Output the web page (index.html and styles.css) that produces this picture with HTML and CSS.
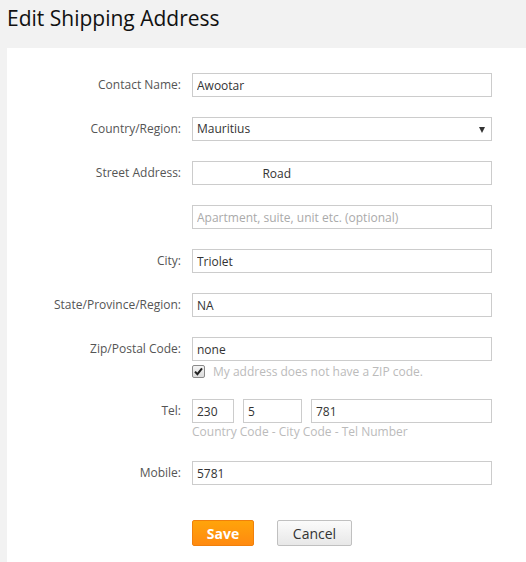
FILE: index.html
```html
<!DOCTYPE html>
<html>
<head>
<meta charset="utf-8">
<link rel="stylesheet" href="styles.css">
</head>
<body>
<h1 class="title">Edit Shipping Address</h1>
<div class="panel">
  <form class="form">
    <div class="row">
      <label class="label">Contact Name:</label>
      <div class="field"><input class="input" type="text" value="Awootar"></div>
    </div>
    <div class="row">
      <label class="label">Country/Region:</label>
      <div class="field select-wrap">
        <div class="input select">Mauritius</div>
        <span class="arrow"></span>
      </div>
    </div>
    <div class="row">
      <label class="label">Street Address:</label>
      <div class="field"><input class="input" type="text" value="                     Road"></div>
    </div>
    <div class="row">
      <label class="label"></label>
      <div class="field"><input class="input" type="text" placeholder="Apartment, suite, unit etc. (optional)"></div>
    </div>
    <div class="row">
      <label class="label">City:</label>
      <div class="field"><input class="input" type="text" value="Triolet"></div>
    </div>
    <div class="row">
      <label class="label">State/Province/Region:</label>
      <div class="field"><input class="input" type="text" value="NA"></div>
    </div>
    <div class="row">
      <label class="label">Zip/Postal Code:</label>
      <div class="field">
        <input class="input" type="text" value="none">
        <div class="note"><span class="check"><svg width="9" height="9" viewBox="0 0 9 9"><path d="M1 4.6 L3.4 7.2 L8 1.4" fill="none" stroke="#222" stroke-width="2"/></svg></span><span>My address does not have a ZIP code.</span></div>
      </div>
    </div>
    <div class="row">
      <label class="label">Tel:</label>
      <div class="field">
        <div class="tel">
          <input class="input tel-cc" type="text" value="230">
          <input class="input tel-city" type="text" value="5">
          <input class="input tel-num" type="text" value="781">
        </div>
        <div class="hint">Country Code - City Code - Tel Number</div>
      </div>
    </div>
    <div class="row">
      <label class="label">Mobile:</label>
      <div class="field"><input class="input" type="text" value="5781"></div>
    </div>
    <div class="row buttons-row">
      <span></span>
      <div class="buttons">
        <button type="button" class="btn btn-save">Save</button>
        <button type="button" class="btn btn-cancel">Cancel</button>
      </div>
    </div>
  </form>
</div>
</body>
</html>
```
FILE: styles.css
```css
html, body {
  margin: 0;
  padding: 0;
}
body {
  background: #f2f2f2;
  font-family: "Open Sans", "Liberation Sans", sans-serif;
  font-size: 12px;
  color: #333;
  padding-left: 7px;
}
.title {
  margin: 0;
  height: 48px;
  line-height: 36px;
  font-size: 21px;
  font-weight: 400;
  color: #111;
}
.panel {
  background: #fff;
  min-height: calc(100vh - 48px);
  box-sizing: border-box;
  padding-top: 25px;
}
.form {
  display: flex;
  flex-direction: column;
  gap: 20px;
  margin: 0;
}
.row {
  display: grid;
  grid-template-columns: 174px 300px;
  column-gap: 11px;
  align-items: start;
}
.label {
  text-align: right;
  line-height: 24px;
  color: #555;
}
.field {
  display: flex;
  flex-direction: column;
}
.input {
  box-sizing: border-box;
  width: 100%;
  height: 24px;
  margin: 0;
  border: 1px solid #cccccc;
  padding: 0 4px;
  font-family: "Open Sans", "Liberation Sans", sans-serif;
  font-size: 12px;
  color: #333;
  background: #fff;
  outline: none;
  line-height: 22px;
}
.input::placeholder {
  color: #aaa;
}
.select-wrap {
  position: relative;
}
.select {
  display: block;
}
.arrow {
  position: absolute;
  right: 7px;
  top: 10px;
  width: 0;
  height: 0;
  border-left: 3px solid transparent;
  border-right: 3px solid transparent;
  border-top: 6px solid #333;
}
.note {
  margin-top: 2px;
  height: 16px;
  display: flex;
  align-items: center;
  gap: 8px;
  color: #bbb;
}
.check {
  box-sizing: border-box;
  width: 13px;
  height: 13px;
  border: 1px solid #8a8a8a;
  border-radius: 2px;
  background: linear-gradient(#f4f4f4, #dcdcdc);
  display: flex;
  align-items: center;
  justify-content: center;
}
.tel {
  display: flex;
  gap: 9px;
}
.tel-cc { width: 42px; }
.tel-city { width: 59px; }
.tel-num { flex: 1; }
.hint {
  line-height: 18px;
  color: #bbb;
}
.buttons-row {
  margin-top: 15px;
}
.buttons {
  display: flex;
  gap: 23px;
}
.btn {
  height: 26px;
  box-sizing: border-box;
  font-family: "Open Sans", "Liberation Sans", sans-serif;
  font-size: 14px;
  border-radius: 2px;
  padding: 0;
  cursor: pointer;
}
.btn-save {
  width: 62px;
  color: #fff;
  font-weight: 700;
  background: linear-gradient(#ffa40a, #ff8a10);
  border: 1px solid #f0800c;
}
.btn-cancel {
  width: 75px;
  color: #333;
  background: linear-gradient(#fbfbfb, #e8e8e8);
  border: 1px solid #c0c0c0;
}
```
